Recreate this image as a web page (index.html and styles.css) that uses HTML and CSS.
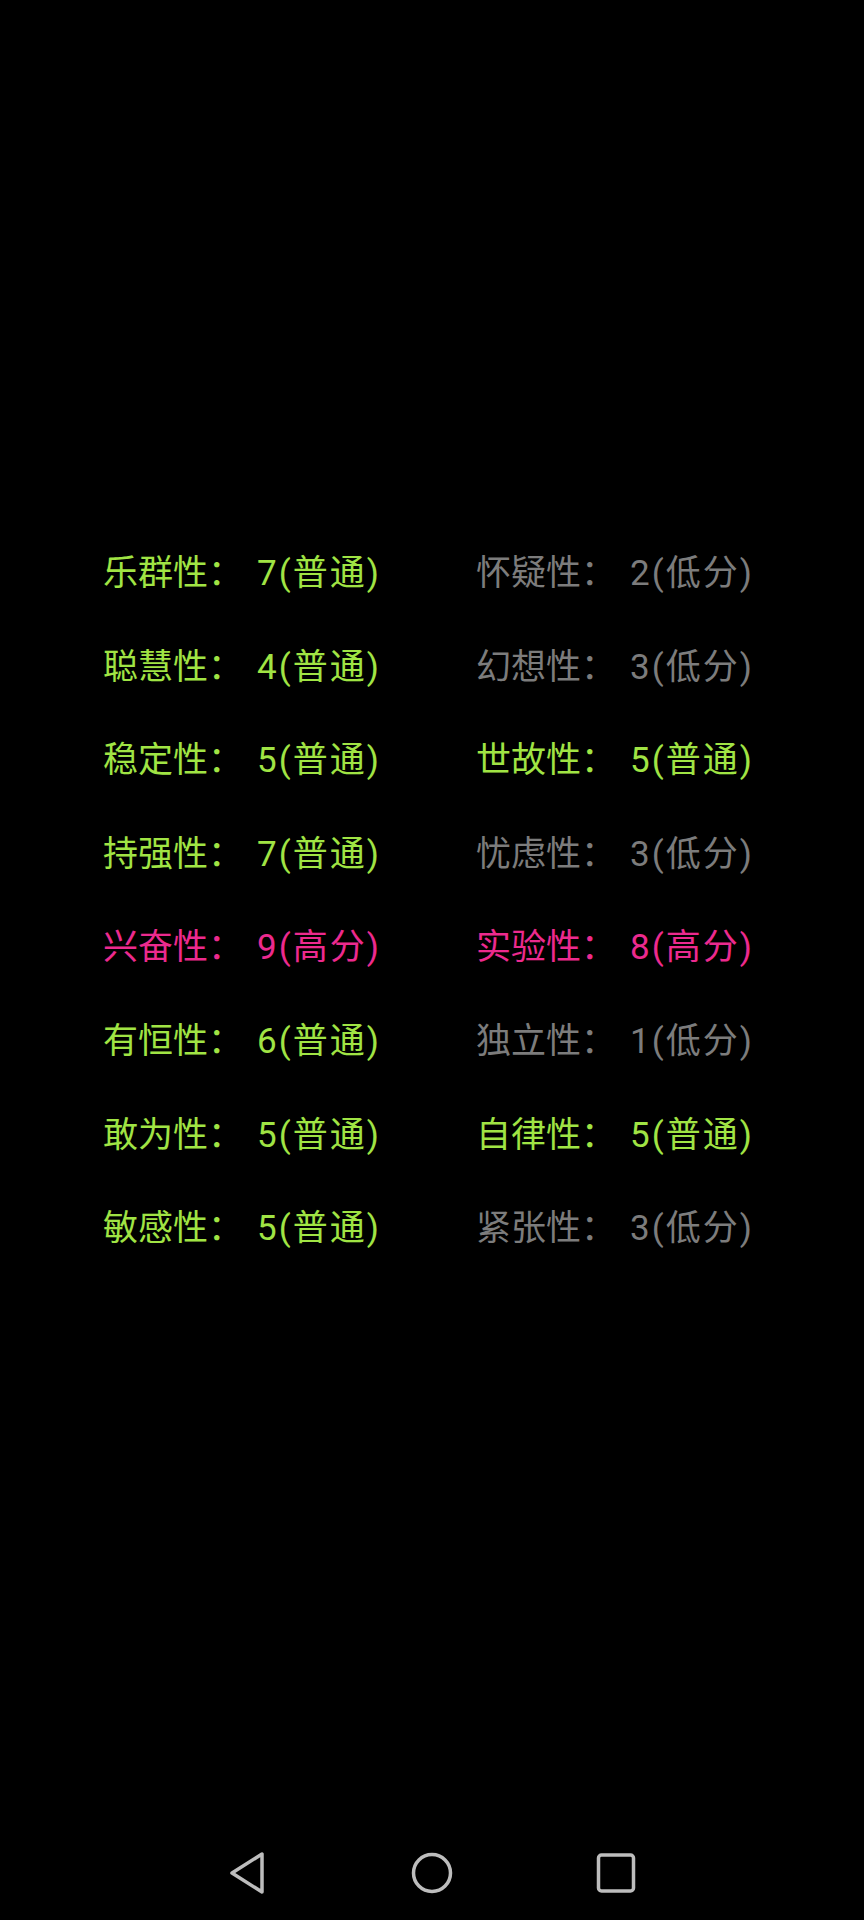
FILE: index.html
```html
<!DOCTYPE html>
<html lang="zh-CN">
<head>
<meta charset="utf-8">
<link rel="stylesheet" href="styles.css">
</head>
<body>
<div class="screen">
  <div class="grid">
    <div class="cell mid">乐群性：<span class="val">7(普通)</span></div>
    <div class="cell low">怀疑性：<span class="val">2(低分)</span></div>
    <div class="cell mid">聪慧性：<span class="val">4(普通)</span></div>
    <div class="cell low">幻想性：<span class="val">3(低分)</span></div>
    <div class="cell mid">稳定性：<span class="val">5(普通)</span></div>
    <div class="cell mid">世故性：<span class="val">5(普通)</span></div>
    <div class="cell mid">持强性：<span class="val">7(普通)</span></div>
    <div class="cell low">忧虑性：<span class="val">3(低分)</span></div>
    <div class="cell high">兴奋性：<span class="val">9(高分)</span></div>
    <div class="cell high">实验性：<span class="val">8(高分)</span></div>
    <div class="cell mid">有恒性：<span class="val">6(普通)</span></div>
    <div class="cell low">独立性：<span class="val">1(低分)</span></div>
    <div class="cell mid">敢为性：<span class="val">5(普通)</span></div>
    <div class="cell mid">自律性：<span class="val">5(普通)</span></div>
    <div class="cell mid">敏感性：<span class="val">5(普通)</span></div>
    <div class="cell low">紧张性：<span class="val">3(低分)</span></div>
  </div>
  <div class="spacer"></div>
  <nav class="navbar">
    <svg class="nav-icon" width="44" height="44" viewBox="0 0 44 44"><path d="M36 3 L36 41 L6 22 Z" fill="none" stroke="#bdbdbd" stroke-width="3.5" stroke-linejoin="round"/></svg>
    <svg class="nav-icon" width="44" height="44" viewBox="0 0 44 44"><circle cx="22" cy="22" r="18.5" fill="none" stroke="#bdbdbd" stroke-width="3.5"/></svg>
    <svg class="nav-icon" width="44" height="44" viewBox="0 0 44 44"><rect x="4.5" y="4" width="35" height="36" rx="3" fill="none" stroke="#bdbdbd" stroke-width="3.5"/></svg>
  </nav>
</div>
</body>
</html>
```
FILE: styles.css
```css
html, body {
  margin: 0;
  padding: 0;
  background: #000;
}
.screen {
  width: 864px;
  height: 1920px;
  display: flex;
  flex-direction: column;
  background: #000;
}
.grid {
  margin-top: 527px;
  padding-left: 103px;
  display: grid;
  grid-template-columns: 373px auto;
  grid-auto-rows: 93.6px;
}
.cell {
  font-family: Roboto, "Noto Sans CJK SC", sans-serif;
  font-size: 35px;
  line-height: 93.6px;
  white-space: nowrap;
}
.val {
  margin-left: 14px;
  letter-spacing: 2px;
}
.mid { color: #a0e444; }
.low { color: #7c7c7c; }
.high { color: #ec2a8e; }
.spacer { flex: 1; }
.navbar {
  height: 94px;
  display: flex;
  justify-content: center;
  align-items: center;
  gap: 140px;
}
.nav-icon { display: block; }
```
